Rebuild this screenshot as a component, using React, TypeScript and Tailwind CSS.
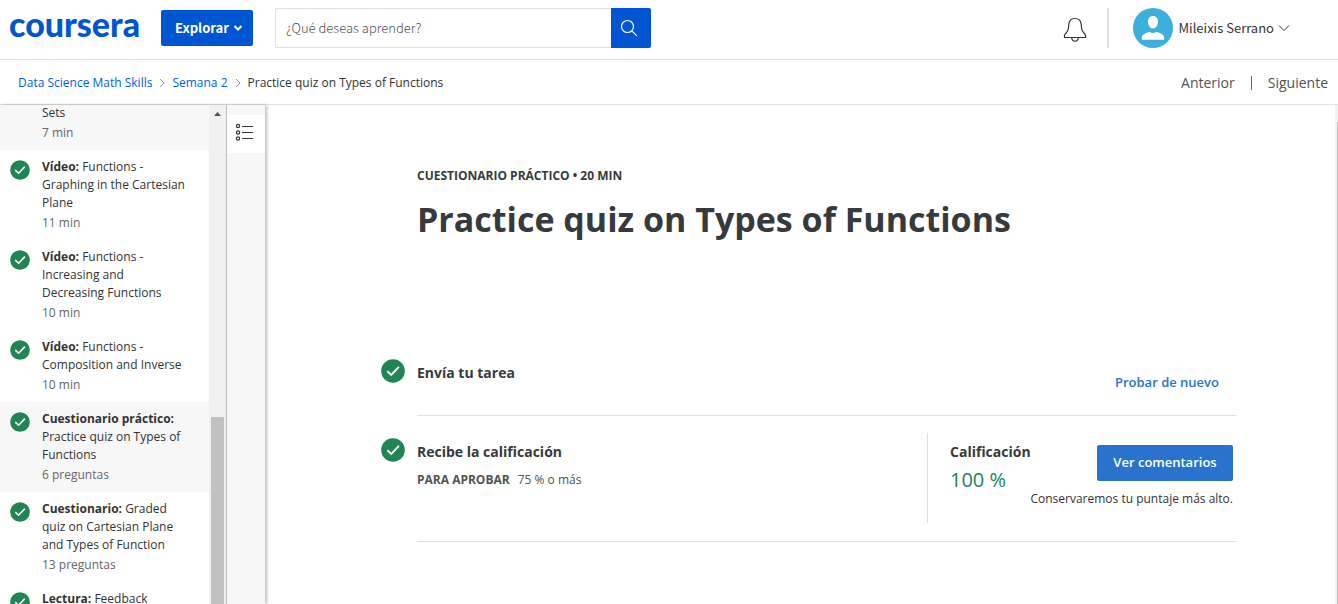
import React from "react";

type Lesson = {
  kind?: string;
  title: string;
  meta?: string;
  active?: boolean;
  done?: boolean;
};

const lessons: Lesson[] = [
  { title: "Sets", meta: "7 min", active: true },
  { kind: "Vídeo:", title: "Functions - Graphing in the Cartesian Plane", meta: "11 min", done: true },
  { kind: "Vídeo:", title: "Functions - Increasing and Decreasing Functions", meta: "10 min", done: true },
  { kind: "Vídeo:", title: "Functions - Composition and Inverse", meta: "10 min", done: true },
  { kind: "Cuestionario práctico:", title: "Practice quiz on Types of Functions", meta: "6 preguntas", active: true, done: true },
  { kind: "Cuestionario:", title: "Graded quiz on Cartesian Plane and Types of Function", meta: "13 preguntas", done: true },
  { kind: "Lectura:", title: "Feedback", done: true },
];

function Check({ className }: { className: string }) {
  return (
    <svg viewBox="0 0 24 24" className={className} aria-hidden="true">
      <circle cx="12" cy="12" r="11.8" fill="#208455" />
      <path d="M6.3 12.2l4 3.7 7.6-8" fill="none" stroke="#fff" strokeWidth="1.9" />
    </svg>
  );
}

function Chevron({ className, d, viewBox }: { className: string; d: string; viewBox: string }) {
  return (
    <svg viewBox={viewBox} className={className} aria-hidden="true">
      <path d={d} fill="none" stroke="currentColor" />
    </svg>
  );
}

function Header() {
  return (
    <header className="flex h-[60px] shrink-0 items-start border-b border-[#e1e1e1] pr-12 pl-[9px] font-['Noto_Sans_CJK_SC',sans-serif]">
      <a href="#inicio" className="mt-1 w-[152px] font-['Lato',sans-serif] text-[34px] leading-[40px] font-black text-[#0056d2]">
        coursera
      </a>
      <button className="mt-[10px] flex h-9 w-[92px] items-center justify-center gap-1 rounded-[2px] bg-[#0056d2] pl-1 text-[13px] font-bold text-white">
        Explorar
        <Chevron viewBox="0 0 10 8" className="h-2 w-[10px] stroke-2" d="M1.5 2L5 5.5 8.500 2" />
      </button>
      <form className="mt-2 ml-[22px] flex h-10 w-[376px]" onSubmit={(e) => e.preventDefault()}>
        <input
          type="text"
          aria-label="Buscar"
          placeholder="¿Qué deseas aprender?"
          className="min-w-0 flex-1 rounded-l-[2px] border border-r-0 border-[#e1e1e1] px-[10px] text-[13px] font-light placeholder:text-[#525252]"
        />
        <button aria-label="Buscar" className="flex w-10 items-center rounded-r-[2px] bg-[#0056d2] pl-[9px]">
          <svg viewBox="0 0 18 18" className="h-[18px] w-[18px]" fill="none" stroke="#fff" strokeWidth="1.2">
            <circle cx="7.500" cy="7.500" r="6" />
            <path d="M12 12l4.800 4.800" />
          </svg>
        </button>
      </form>
      <div className="ml-auto flex items-start">
        <button aria-label="Notificaciones" className="mt-[17px]">
          <svg viewBox="0 0 24 26" className="h-[26px] w-6" fill="none" stroke="#333" strokeWidth="1.2">
            <path d="M1.500 20.500v-2.300l2.600-3.500c.9-1.200 1.300-2.600 1.400-4.200l.3-3.200C6.200 3.500 8.700 1.500 12 1.500s5.800 2 6.200 5.800l.3 3.200c.1 1.600.5 3 1.400 4.200l2.600 3.500v2.300z" />
            <path d="M8.700 20.700c.2 2.200 1.500 3.500 3.300 3.500s3.100-1.300 3.300-3.500" />
          </svg>
        </button>
        <div className="mt-2 ml-5 h-10 w-[2px] bg-[#e1e1e1]" />
        <button className="mt-2 ml-6 flex h-10 items-center text-[13px] text-[#333]">
          <svg viewBox="0 0 40 40" className="h-10 w-10" aria-hidden="true">
            <circle cx="20" cy="20" r="20" fill="#3cafda" />
            <path d="M20 8c3.200 0 5 2.300 5 5.500 0 3.500-2 7-5 7s-5-3.500-5-7C15 10.300 16.800 8 20 8z" fill="#fff" />
            <path d="M8.800 31.800v-2.600c0-2.700 5.200-4.800 8-5.200 1.900 1.300 4.500 1.300 6.400 0 2.800.4 8 2.500 8 5.200v2.600z" fill="#fff" />
          </svg>
          <span className="mr-1 ml-[6px]">Mileixis Serrano</span>
          <Chevron viewBox="0 0 12 8" className="h-2 w-3" d="M1 1.500l5 5 5-5" />
        </button>
      </div>
    </header>
  );
}

function Breadcrumbs() {
  return (
    <nav className="flex h-[45px] shrink-0 items-center border-b border-[#e1e1e1] pt-[2px] pr-[10px] pl-[18px] text-xs text-[#333]">
      <a href="#curso" className="text-[#0062e0]">Data Science Math Skills</a>
      <Chevron viewBox="0 0 6 10" className="mx-[7px] h-[10px] w-[6px] text-[#999]" d="M1 1l4 4-4 4" />
      <a href="#semana" className="text-[#0062e0]">Semana 2</a>
      <Chevron viewBox="0 0 6 10" className="mx-[7px] h-[10px] w-[6px] text-[#999]" d="M1 1l4 4-4 4" />
      <span>Practice quiz on Types of Functions</span>
      <div className="ml-auto flex items-center gap-4 text-sm text-[#525252]">
        <a href="#anterior">Anterior</a>
        <span className="h-[14px] w-px bg-[#666]" />
        <a href="#siguiente">Siguiente</a>
      </div>
    </nav>
  );
}

function Sidebar() {
  return (
    <aside className="relative z-10 flex w-[265px] shrink-0 bg-white shadow-[2px_0_3px_rgba(0,0,0,0.25)]">
      <div className="min-w-0 flex-1 overflow-hidden">
        <ul className="-mt-[9px]">
          {lessons.map((l) => (
            <li key={l.title} className={l.active ? "bg-[#f7f7f7]" : "bg-white"}>
              <a href="#leccion" className="flex py-2 pr-5 pl-[10px] text-xs leading-[18px]">
                <span className="mt-[2px] mr-3 w-5 shrink-0">{l.done && <Check className="h-5 w-5" />}</span>
                <span className="flex flex-col gap-[2px]">
                  <span className="text-[#333]">
                    {l.kind && <strong className="font-bold">{l.kind} </strong>}
                    {l.title}
                  </span>
                  {l.meta && <span className="text-[#666]">{l.meta}</span>}
                </span>
              </a>
            </li>
          ))}
        </ul>
      </div>
      <div className="flex w-[17px] flex-col items-center bg-[#f1f1f1]">
        <svg viewBox="0 0 7 4" className="mt-[7px] h-1 w-[7px]" aria-hidden="true">
          <path d="M0 4l3.500-4L7 4z" fill="#505050" />
        </svg>
        <div className="mt-[301px] w-[13px] flex-1 bg-[#c1c1c1]" />
      </div>
      <div className="w-[39px] border-l border-[#bdbdbd] bg-[#f7f7f7] pt-[10px]">
        <button aria-label="Mostrar lista" className="flex h-[38px] w-full items-start bg-white pt-2 pl-2">
          <svg viewBox="0 0 19 18" className="h-[18px] w-[19px]" fill="none" stroke="#333" strokeWidth="1.200">
            <circle cx="3" cy="3" r="1.600" />
            <circle cx="3" cy="9.500" r="1.600" />
            <circle cx="3" cy="15.500" r="1.600" />
            <path d="M7 3.500h11M7 9.500h11M7 15.500h11" />
          </svg>
        </button>
      </div>
    </aside>
  );
}

function Quiz() {
  return (
    <main className="min-w-0 flex-1 overflow-hidden pt-[62px] pr-[99px] pl-[116px] text-[#373a3c]">
      <div className="pl-9">
        <p className="text-xs leading-[18px] font-bold">CUESTIONARIO PRÁCTICO • 20 MIN</p>
        <h1 className="mt-[10px] text-[34px] leading-[48px] font-bold">Practice quiz on Types of Functions</h1>
      </div>
      <section className="mt-24 flex">
        <Check className="mt-5 mr-3 h-6 w-6 shrink-0" />
        <div className="flex h-[77px] flex-1 items-start justify-between border-b border-[#e1e1e1] pr-[17px]">
          <h2 className="mt-[22px] text-sm leading-6 font-bold">Envía tu tarea</h2>
          <button className="mt-[33px] text-[13px] leading-5 font-semibold text-[#2a73cc]">Probar de nuevo</button>
        </div>
      </section>
      <section className="flex">
        <Check className="mt-[22px] mr-3 h-6 w-6 shrink-0" />
        <div className="flex flex-1 justify-between border-b border-[#e1e1e1] pt-[17px] pr-[3px] pb-[18px]">
          <div className="pt-[7px]">
            <h2 className="text-sm leading-6 font-bold">Recibe la calificación</h2>
            <p className="mt-[6px] text-xs leading-5 text-[#525252]">
              <strong className="mr-2 font-bold">PARA APROBAR</strong>75 % o más
            </p>
          </div>
          <div className="flex h-[90px] border-l border-[#e1e1e1] pl-[22px]">
            <div className="w-20 pt-[7px]">
              <h2 className="text-sm leading-6 font-bold">Calificación</h2>
              <p className="mt-[2px] text-xl leading-7 text-[#208455]">100 %</p>
            </div>
            <div className="flex w-[203px] flex-col items-end pt-3">
              <button className="h-9 w-[136px] rounded-[2px] bg-[#2a73cc] text-[13px] font-semibold text-white">Ver comentarios</button>
              <p className="mt-2 text-xs leading-5 whitespace-nowrap text-[#333]">Conservaremos tu puntaje más alto.</p>
            </div>
          </div>
        </div>
      </section>
    </main>
  );
}

export default function App() {
  return (
    <div className="flex h-screen flex-col overflow-hidden bg-white font-['Open_Sans',sans-serif]">
      <Header />
      <Breadcrumbs />
      <div className="flex min-h-0 flex-1">
        <Sidebar />
        <Quiz />
        <div className="flex w-[3px] justify-end bg-[#f1f1f1] pt-[17px]">
          <div className="w-px bg-[#c1c1c1]" />
        </div>
      </div>
    </div>
  );
}
